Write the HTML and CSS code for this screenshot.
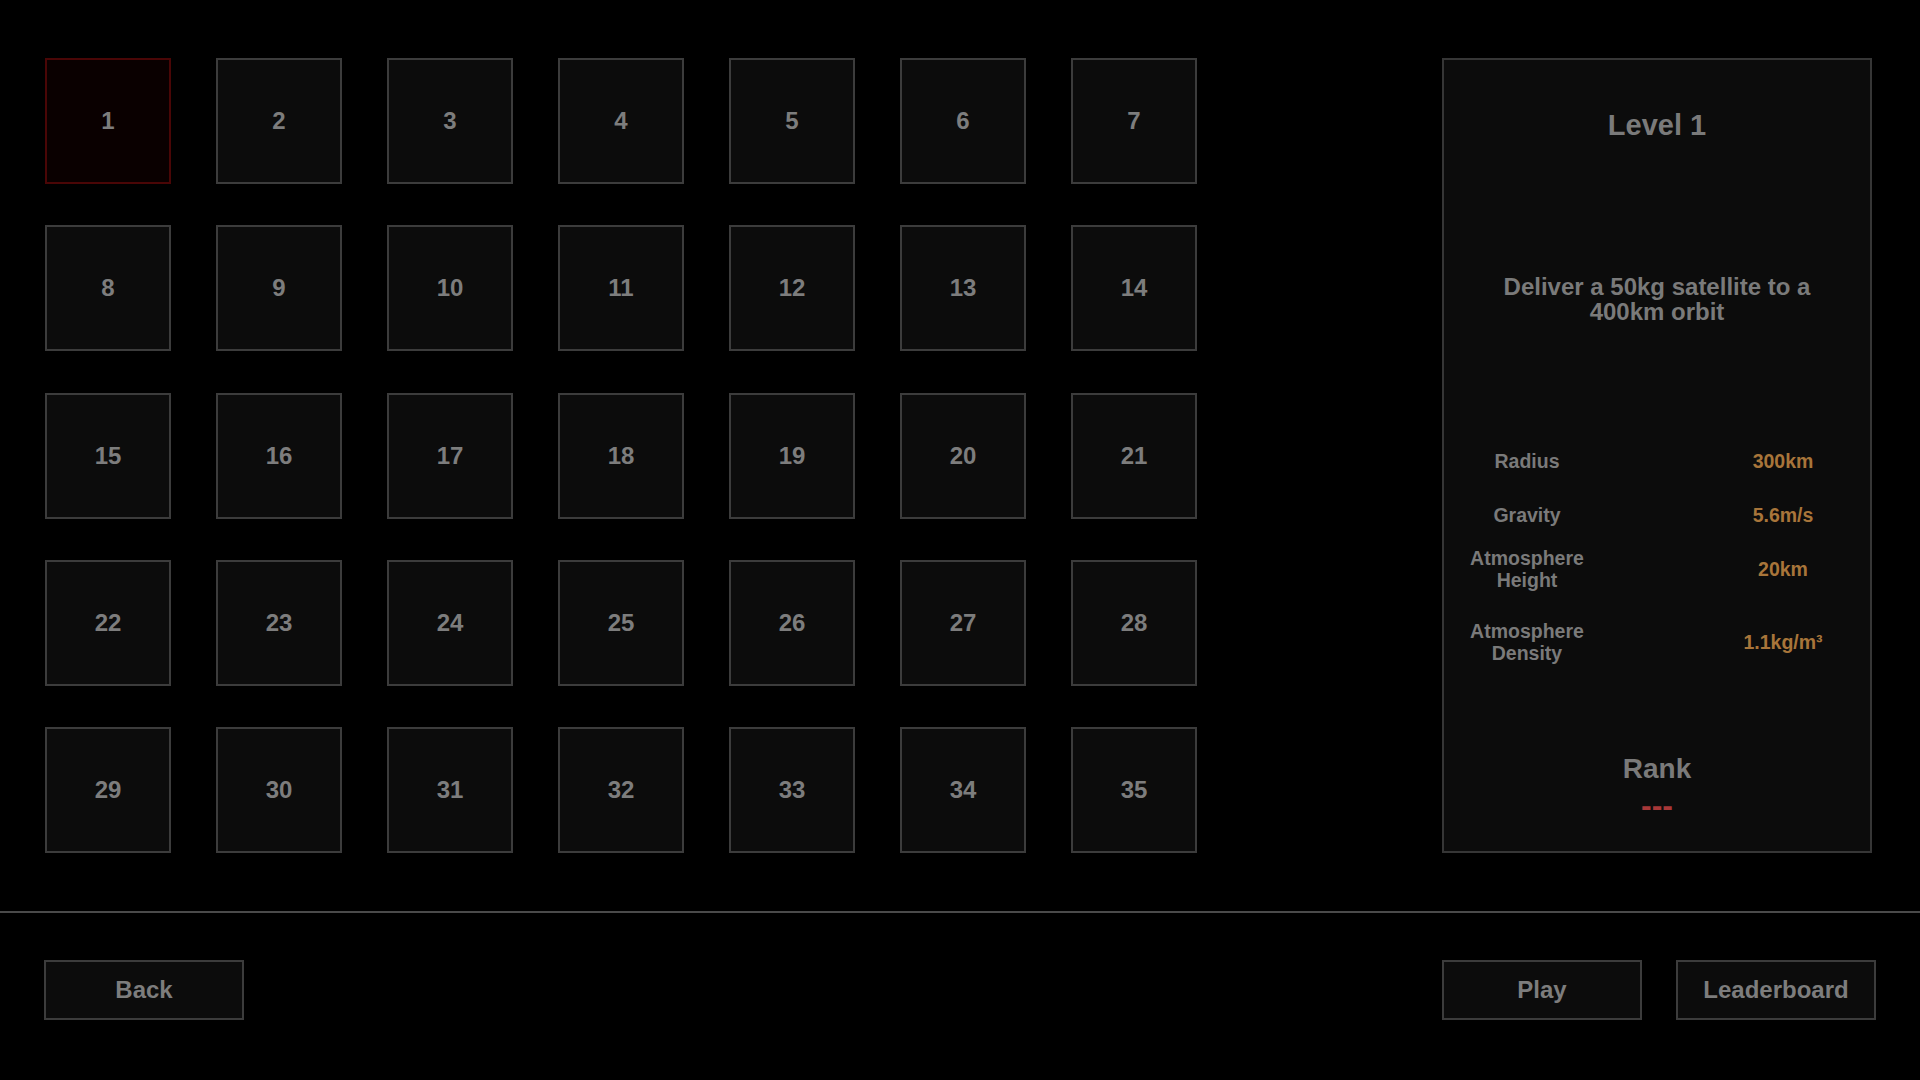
FILE: index.html
```html
<!DOCTYPE html>
<html lang="en">
<head>
<meta charset="utf-8">
<title>Level Select</title>
<link rel="stylesheet" href="styles.css">
</head>
<body>
<div class="screen">
  <main class="main">
    <div class="levels">
      <button class="tile selected">1</button>
      <button class="tile">2</button>
      <button class="tile">3</button>
      <button class="tile">4</button>
      <button class="tile">5</button>
      <button class="tile">6</button>
      <button class="tile">7</button>
      <button class="tile">8</button>
      <button class="tile">9</button>
      <button class="tile">10</button>
      <button class="tile">11</button>
      <button class="tile">12</button>
      <button class="tile">13</button>
      <button class="tile">14</button>
      <button class="tile">15</button>
      <button class="tile">16</button>
      <button class="tile">17</button>
      <button class="tile">18</button>
      <button class="tile">19</button>
      <button class="tile">20</button>
      <button class="tile">21</button>
      <button class="tile">22</button>
      <button class="tile">23</button>
      <button class="tile">24</button>
      <button class="tile">25</button>
      <button class="tile">26</button>
      <button class="tile">27</button>
      <button class="tile">28</button>
      <button class="tile">29</button>
      <button class="tile">30</button>
      <button class="tile">31</button>
      <button class="tile">32</button>
      <button class="tile">33</button>
      <button class="tile">34</button>
      <button class="tile">35</button>
    </div>
    <aside class="panel">
      <h1 class="panel-title">Level 1</h1>
      <p class="panel-desc">Deliver a 50kg satellite to a 400km orbit</p>
      <div class="stats">
        <div class="stat-label">Radius</div>
        <div class="stat-value">300km</div>
        <div class="stat-label">Gravity</div>
        <div class="stat-value">5.6m/s</div>
        <div class="stat-label">Atmosphere<br>Height</div>
        <div class="stat-value">20km</div>
        <div class="stat-label">Atmosphere<br>Density</div>
        <div class="stat-value">1.1kg/m³</div>
      </div>
      <div class="rank-title">Rank</div>
      <div class="rank-value">---</div>
    </aside>
  </main>
  <hr class="divider">
  <footer class="footer">
    <button class="btn">Back</button>
    <div class="footer-right">
      <button class="btn">Play</button>
      <button class="btn">Leaderboard</button>
    </div>
  </footer>
</div>
</body>
</html>
```

FILE: styles.css
```css
html, body {
  margin: 0;
  padding: 0;
  background: #000;
}

body {
  width: 1920px;
  height: 1080px;
  overflow: hidden;
  font-family: "Liberation Sans", Arial, sans-serif;
  font-weight: bold;
  color: #7d7d7d;
}

.screen {
  display: flex;
  flex-direction: column;
}

.main {
  display: flex;
  justify-content: space-between;
  align-items: stretch;
  padding: 58px 48px 0 45px;
}

.levels {
  display: grid;
  grid-template-columns: repeat(7, 126px);
  grid-template-rows: repeat(5, 126px);
  column-gap: 45px;
  row-gap: 41.25px;
}

.tile {
  box-sizing: border-box;
  width: 126px;
  height: 126px;
  margin: 0;
  padding: 0;
  background: #0c0c0c;
  border: 2px solid #3c3c3c;
  color: #7d7d7d;
  font-family: inherit;
  font-weight: bold;
  font-size: 24px;
  display: flex;
  align-items: center;
  justify-content: center;
}

.tile.selected {
  background: #0a0000;
  border-color: #4a0606;
}

.panel {
  box-sizing: border-box;
  width: 430px;
  background: #0c0c0c;
  border: 2px solid #363636;
  display: flex;
  flex-direction: column;
  align-items: stretch;
  padding-top: 49px;
  text-align: center;
}

.panel-title {
  margin: 0;
  font-size: 29px;
  line-height: 33px;
  font-weight: bold;
  color: #7a7a7a;
}

.panel-desc {
  margin: 132px 0 0;
  padding: 0 40px;
  font-size: 24px;
  line-height: 25px;
  color: #7a7a7a;
}

.stats {
  margin-top: 110px;
  display: grid;
  grid-template-columns: 160px 160px;
  grid-template-rows: 54px 54px 54px 92px;
  column-gap: 96px;
  padding-left: 3px;
  align-items: center;
  font-size: 19.5px;
  line-height: 22px;
}

.stat-label {
  color: #7a7a7a;
  text-align: center;
}

.stat-value {
  color: #a8753a;
  text-align: center;
}

.rank-title {
  margin-top: 65px;
  font-size: 28px;
  line-height: 32px;
  color: #7a7a7a;
}

.rank-value {
  margin-top: 2px;
  font-size: 32px;
  line-height: 37px;
  color: #a83838;
}

.divider {
  margin: 58px 0 0;
  border: 0;
  height: 2px;
  background: #4a4a4a;
}

.footer {
  display: flex;
  justify-content: space-between;
  padding: 47px 44px 0 44px;
}

.footer-right {
  display: flex;
  gap: 34px;
}

.btn {
  box-sizing: border-box;
  width: 200px;
  height: 60px;
  margin: 0;
  padding: 0;
  background: #0c0c0c;
  border: 2px solid #3c3c3c;
  color: #7d7d7d;
  font-family: inherit;
  font-weight: bold;
  font-size: 24px;
}
```
